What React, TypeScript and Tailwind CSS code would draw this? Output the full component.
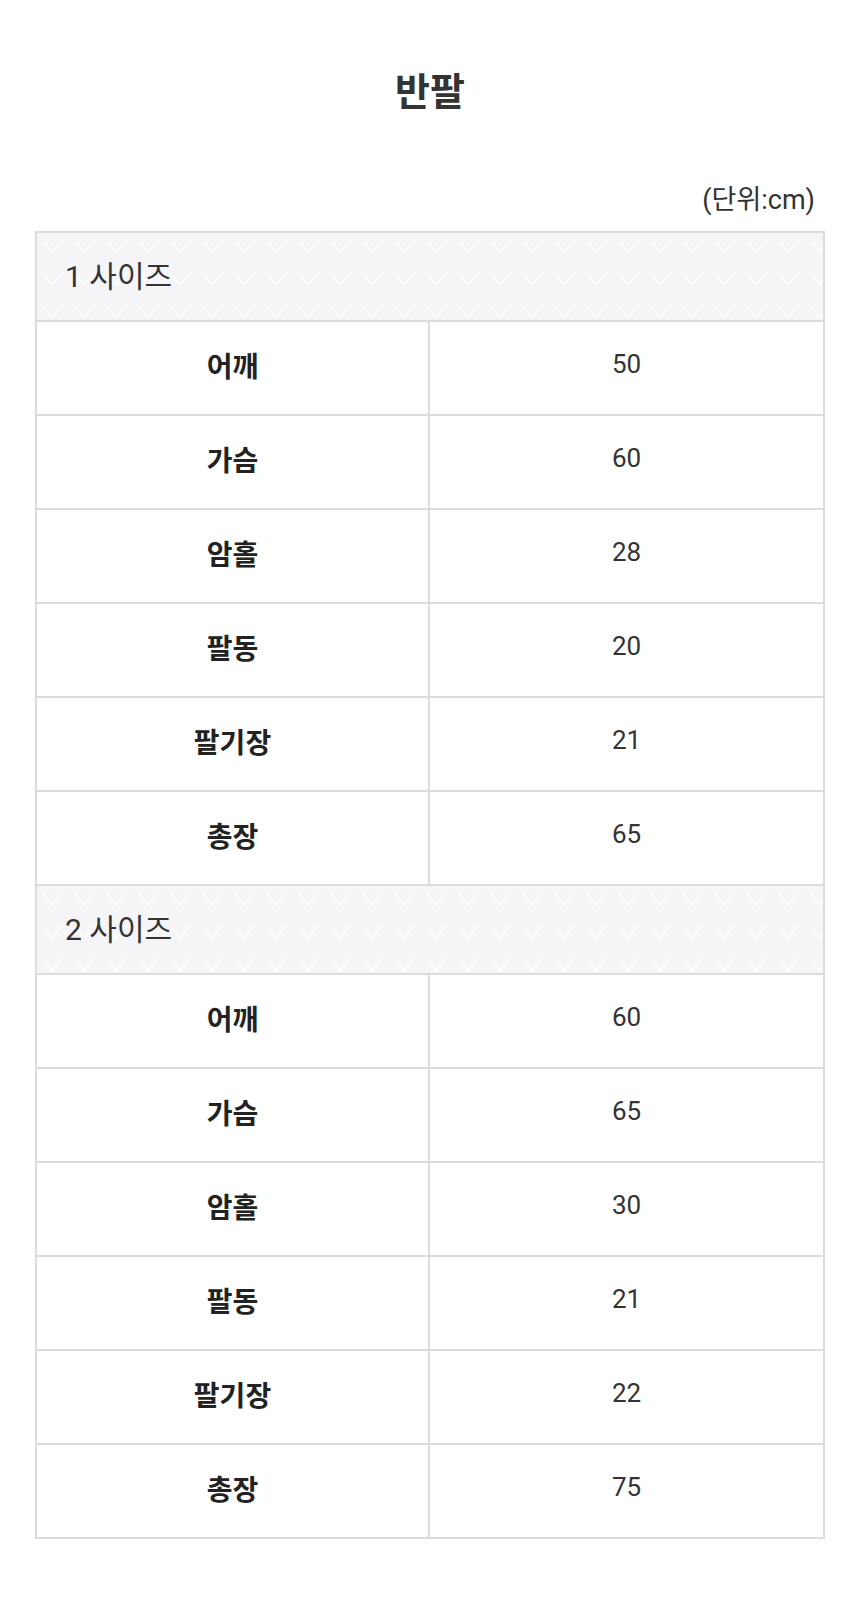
import { useId } from "react"

type Size = {
  name: string
  rows: [string, string][]
}

const sizes: Size[] = [
  {
    name: "1 사이즈",
    rows: [
      ["어깨", "50"],
      ["가슴", "60"],
      ["암홀", "28"],
      ["팔동", "20"],
      ["팔기장", "21"],
      ["총장", "65"],
    ],
  },
  {
    name: "2 사이즈",
    rows: [
      ["어깨", "60"],
      ["가슴", "65"],
      ["암홀", "30"],
      ["팔동", "21"],
      ["팔기장", "22"],
      ["총장", "75"],
    ],
  },
]

function CheckPattern() {
  const id = useId()
  return (
    <svg className="absolute inset-0 h-full w-full" aria-hidden>
      <defs>
        <pattern
          id={id}
          x="0"
          y="0"
          width="32"
          height="33"
          patternUnits="userSpaceOnUse"
        >
          <polyline
            points="6,8 15,19 26,6"
            fill="none"
            stroke="#ffffff"
            strokeWidth="2"
            strokeOpacity="0.7"
          />
        </pattern>
      </defs>
      <rect width="100%" height="100%" fill={`url(#${id})`} />
    </svg>
  )
}

function SizeSection({ size, last }: { size: Size; last: boolean }) {
  return (
    <div>
      <div className="relative flex h-[89px] items-center border-b-2 border-[#dcdcdc] bg-[#f5f5f8] pl-[28px]">
        <CheckPattern />
        <span className="relative text-[30px] text-[#333]">{size.name}</span>
      </div>

      {size.rows.map(([label, value], i) => (
        <div
          key={`${size.name}-${i.toString()}`}
          className={
            last && i === size.rows.length - 1
              ? "grid h-[92px] grid-cols-2"
              : "grid h-[94px] grid-cols-2 border-b-2 border-[#dcdcdc]"
          }
        >
          <div className="flex items-center justify-center border-r-2 border-[#dcdcdc] text-[28px] font-bold text-[#222]">
            {label}
          </div>
          <div className="flex items-center justify-center pb-[8px] text-[26px] text-[#333]">
            {value}
          </div>
        </div>
      ))}
    </div>
  )
}

export default function App() {
  return (
    <div className="min-h-[1624px] w-[860px] bg-white font-['Roboto','Noto_Sans_CJK_KR',sans-serif]">
      <h1 className="pt-[66px] text-center text-[38px] leading-[52px] font-bold text-[#333]">
        반팔
      </h1>

      <div className="px-[35px] pt-[64px]">
        <p className="pr-[10px] text-right text-[27px] leading-[36px] text-[#333]">
          (단위:cm)
        </p>

        <div className="mt-[13px] border-2 border-[#dcdcdc]">
          {sizes.map((size, i) => (
            <SizeSection
              key={size.name}
              size={size}
              last={i === sizes.length - 1}
            />
          ))}
        </div>
      </div>
    </div>
  )
}
